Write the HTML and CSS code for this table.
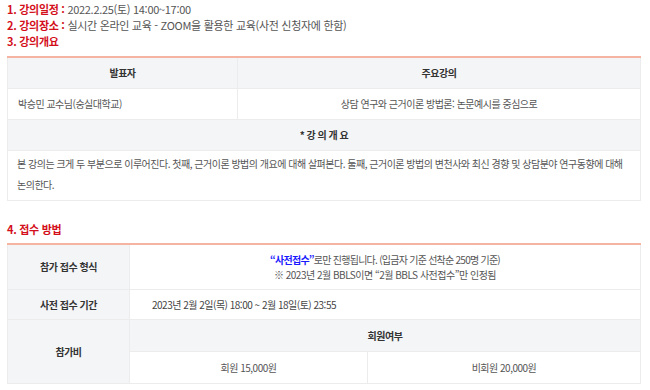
FILE: index.html
```html
<!DOCTYPE html>
<html lang="ko">
<head>
<meta charset="utf-8">
<link rel="stylesheet" href="styles.css">
</head>
<body>
<div class="wrap">
  <p class="line"><span class="red">1. 강의일정 :</span> 2022.2.25(토) 14:00~17:00</p>
  <p class="line"><span class="red">2. 강의장소 :</span> 실시간 온라인 교육 - ZOOM을 활용한 교육(사전 신청자에 한함)</p>
  <p class="line"><span class="red">3. 강의개요</span></p>

  <table class="t1">
    <colgroup><col class="c1"><col></colgroup>
    <tr class="h"><th>발표자</th><th>주요강의</th></tr>
    <tr class="r"><td class="left">박승민 교수님(숭실대학교)</td><td>상담 연구와 근거이론 방법론: 논문예시를 중심으로</td></tr>
    <tr class="h"><th colspan="2">* 강 의 개 요</th></tr>
    <tr><td colspan="2" class="desc">본 강의는 크게 두 부분으로 이루어진다. 첫째, 근거이론 방법의 개요에 대해 살펴본다. 둘째, 근거이론 방법의 변천사와 최신 경향 및 상담분야 연구동향에 대해 논의한다.</td></tr>
  </table>

  <p class="line sec"><span class="red">4. 접수 방법</span></p>

  <table class="t2">
    <colgroup><col class="k"><col class="m"><col></colgroup>
    <tr class="r1">
      <th class="key">참가 접수 형식</th>
      <td colspan="2" class="two"><span class="first"><span class="blue">“사전접수”</span>로만 진행됩니다. (입금자 기준 선착순 250명 기준)</span><br>※ 2023년 2월 BBLS이면 “2월 BBLS 사전접수”만 인정됨</td>
    </tr>
    <tr class="r2">
      <th class="key">사전 접수 기간</th>
      <td colspan="2" class="date">2023년 2월 2일(목) 18:00 ~ 2월 18일(토) 23:55</td>
    </tr>
    <tr class="r3">
      <th class="key" rowspan="2">참가비</th>
      <th colspan="2" class="sub">회원여부</th>
    </tr>
    <tr class="r4">
      <td>회원 15,000원</td>
      <td>비회원 20,000원</td>
    </tr>
  </table>
</div>
</body>
</html>
```

FILE: styles.css
```css
* { box-sizing: border-box; }
html, body { margin: 0; padding: 0; background: #fff; }
body {
  font-family: "Noto Sans CJK KR", "Noto Sans", sans-serif;
  font-size: 11px;
  color: #555;
  letter-spacing: -0.3px;
}
.wrap { padding: 1px 9px 0 7px; }
.line { margin: 0; height: 16px; line-height: 16px; }
.red { color: #d40f1c; font-weight: bold; }
.blue { color: #1a1aff; font-weight: bold; }
.sec { margin-top: 20px; }

table { width: 634px; border-collapse: collapse; table-layout: fixed; }
td, th {
  border: 1px solid #ececec;
  font-size: 10px;
  letter-spacing: -0.5px;
  text-align: center;
  padding: 0 10px;
}
th { font-weight: bold; color: #333; background: #f4f5f7; }

.t1 { margin-top: 7px; border-top: 2px solid #f5b4a2; }
.t1 .c1 { width: 230px; }
.t1 tr.h th, .t1 tr.r td { height: 31px; }
.t1 td.left { text-align: left; padding-left: 10px; }
.t1 td.desc {
  text-align: left;
  padding: 2px 8px 5px 9px;
  line-height: 21px;
  letter-spacing: -0.5px;
  word-break: keep-all;
}

.t2 { margin-top: 6px; border-top: 2px solid #f5b4a2; }
.t2 .k { width: 122px; }
.t2 .m { width: 238px; }
.t2 .key { background: #f4f5f7; }
.t2 .r1 td, .t2 .r1 th { height: 46px; }
.t2 td.two { line-height: 15px; }
.t2 .first { letter-spacing: -0.75px; }
.t2 .r2 td, .t2 .r2 th { height: 30px; }
.t2 td.date { text-align: left; padding-left: 22px; color: #444; }
.t2 .r3 th { height: 32px; }
.t2 .r4 td { height: 32px; }
```
